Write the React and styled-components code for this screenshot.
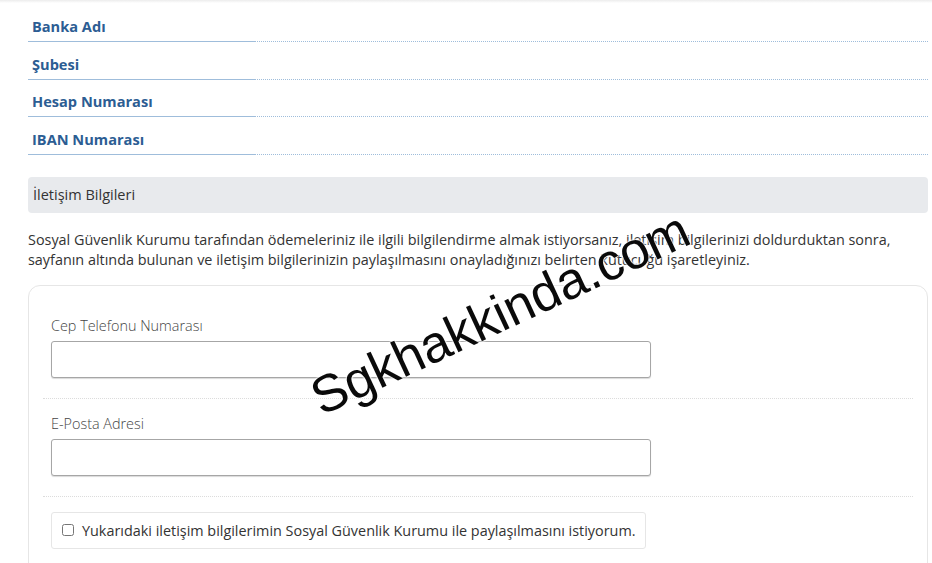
import React from 'react'
import styled, { createGlobalStyle } from 'styled-components'

const GlobalStyle = createGlobalStyle`
  body {
    margin: 0;
    background: #fff;
    font-family: "Open Sans", "Noto Sans", Arial, sans-serif;
    color: #333;
  }
`

const bankFields = ['Banka Adı', 'Şubesi', 'Hesap Numarası', 'IBAN Numarası']

const App = () => {
  return (
    <Page>
      <GlobalStyle />
      <TopEdge />
      <Content>
        {/* banka bilgileri */}
        <FieldList>
          {bankFields.map((f) => (
            <FieldRow key={f}>
              <FieldLabel>{f}</FieldLabel>
              <Rule>
                <Solid />
                <Dotted />
              </Rule>
            </FieldRow>
          ))}
        </FieldList>

        <SectionHeader>İletişim Bilgileri</SectionHeader>

        <Info>
          Sosyal Güvenlik Kurumu tarafından ödemeleriniz ile ilgili bilgilendirme almak istiyorsanız, iletişim bilgilerinizi doldurduktan sonra,
          sayfanın altında bulunan ve iletişim bilgilerinizin paylaşılmasını onayladığınızı belirten kutucuğu işaretleyiniz.
        </Info>

        <Card>
          <Group>
            <InputLabel htmlFor='cep'>Cep Telefonu Numarası</InputLabel>
            <TextInput id='cep' type='text' />
          </Group>
          <Group>
            <InputLabel htmlFor='eposta'>E-Posta Adresi</InputLabel>
            <TextInput id='eposta' type='text' />
          </Group>
          <Group $last>
            <CheckBox>
              <input type='checkbox' />
              <span>Yukarıdaki iletişim bilgilerimin Sosyal Güvenlik Kurumu ile paylaşılmasını istiyorum.</span>
            </CheckBox>
          </Group>
        </Card>
      </Content>

      <Watermark>Sgkhakkinda.com</Watermark>
    </Page>
  )
}

const Page = styled.div`
  position: relative;
  width: 932px;
  height: 563px;
  overflow: hidden;
`

const TopEdge = styled.div`
  height: 3px;
  background: linear-gradient(#ececec, #fff);
`

const Content = styled.div`
  padding: 0 4px 0 28px;
`

const FieldList = styled.div`
  padding-top: 1.5px;
`

const FieldRow = styled.div`
  height: 37.5px;
  box-sizing: border-box;
  padding-top: 11.5px;
  display: flex;
  flex-direction: column;
`

const FieldLabel = styled.div`
  padding-left: 4px;
  font-size: 14.6px;
  line-height: 20px;
  font-weight: 700;
  color: #2c5d93;
  margin-bottom: 5px;
`

const Rule = styled.div`
  display: flex;
  height: 1px;
`

const Solid = styled.span`
  width: 226px;
  background: #9fbddb;
`

const Dotted = styled.span`
  flex: 1;
  border-top: 1px dotted #9fbddb;
`

const SectionHeader = styled.div`
  margin-top: 22px;
  height: 36px;
  display: flex;
  align-items: center;
  padding-left: 5px;
  background: #e8eaed;
  border-radius: 4px;
  font-size: 14.5px;
  color: #333;
`

const Info = styled.p`
  margin: 17px 0 15px;
  font-size: 14.4px;
  line-height: 20px;
  color: #333;
`

const Card = styled.div`
  border: 1px solid #e6e6e6;
  border-radius: 12px;
  padding: 15px 14px 0;
  height: 300px;
`

const Group = styled.div`
  padding: 15px 8px 20px;
  border-bottom: ${({ $last }) => ($last ? 'none' : '1px dotted #dcdcdc')};
`

const InputLabel = styled.label`
  display: block;
  font-size: 14.4px;
  font-weight: 300;
  line-height: 20px;
  color: #444;
  margin-bottom: 5px;
`

const TextInput = styled.input`
  display: block;
  box-sizing: border-box;
  width: 600px;
  height: 37px;
  border: 1px solid #a6a6a6;
  border-radius: 3px;
  box-shadow: 0 1px 1px rgba(0, 0, 0, 0.15);
  outline: none;
`

const CheckBox = styled.label`
  display: inline-flex;
  align-items: center;
  box-sizing: border-box;
  height: 37px;
  padding: 0 9px 0 10px;
  border: 1px solid #e6e6e6;
  border-radius: 3px;
  font-size: 14.4px;
  color: #333;

  input {
    width: 12px;
    height: 12px;
    margin: 0 8px 0 0;
  }
`

const Watermark = styled.div`
  position: absolute;
  left: 294px;
  top: 283px;
  width: 412px;
  text-align: center;
  font-family: "Liberation Sans", Arial, sans-serif;
  font-size: 52px;
  line-height: 60px;
  color: #0a0a0a;
  white-space: nowrap;
  transform: rotate(-25deg);
  text-shadow: 0 0 2px #fff, 0 0 2px #fff, 0 0 3px #fff;
  pointer-events: none;
`

export default App
